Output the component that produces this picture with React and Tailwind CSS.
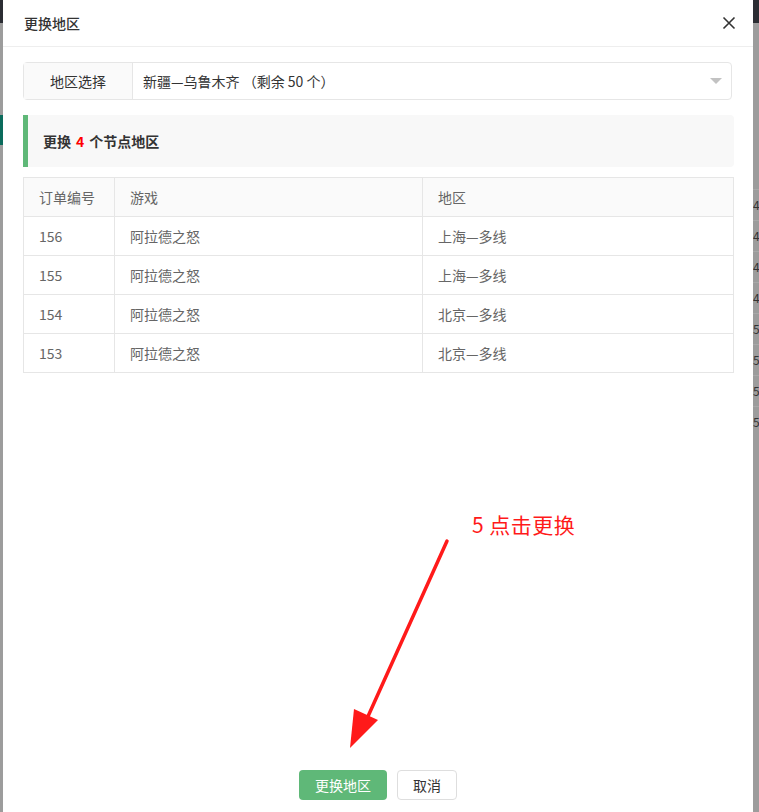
import React from 'react';

const ROWS = [
  { id: '156', game: '阿拉德之怒', region: '上海—多线' },
  { id: '155', game: '阿拉德之怒', region: '上海—多线' },
  { id: '154', game: '阿拉德之怒', region: '北京—多线' },
  { id: '153', game: '阿拉德之怒', region: '北京—多线' },
];

const SIDE_DIGITS = ['4', '4', '4', '4', '5', '5', '5', '5'];

export default function App() {
  return (
    <div
      className="flex h-[812px] w-[759px] overflow-hidden bg-[#999]"
      style={{ fontFamily: '"Noto Sans CJK SC", "Noto Sans", "Liberation Sans", sans-serif' }}
    >
      {/* Page behind, left edge */}
      <div className="flex w-[3px] shrink-0 flex-col bg-[#9c9c9c]">
        <div className="h-[23px] bg-[#2b2d33]" />
        <div className="mt-[92px] h-[30px] bg-[#0b6b5c]" />
      </div>

      {/* Modal */}
      <div className="relative flex w-[750px] shrink-0 flex-col bg-white">
        {/* Header */}
        <div className="flex h-[47px] shrink-0 items-center justify-between border-b border-[#eee] pl-[21px] pr-[17px]">
          <span className="text-[14px] font-medium text-[#333]">更换地区</span>
          <svg className="h-[14px] w-[14px]" viewBox="0 0 14 14" fill="none" stroke="#333" strokeWidth="1.6">
            <path d="M1.5 1.5l11 11M12.5 1.5l-11 11" />
          </svg>
        </div>

        {/* Body */}
        <div className="flex flex-1 flex-col pl-5 pr-[19px] pt-[15px]">
          {/* Region select */}
          <div className="mr-[2px] flex h-[38px] rounded-sm border border-[#e6e6e6]">
            <div className="flex w-[109px] items-center justify-center border-r border-[#e6e6e6] bg-[#fafafa] text-[14px] text-[#333]">
              地区选择
            </div>
            <div className="flex flex-1 items-center justify-between pl-[10px] pr-[9px] text-[14px] text-[#333]">
              <span>新疆—乌鲁木齐 （剩余 50 个）</span>
              <span className="h-0 w-0 border-x-[6px] border-t-[6px] border-x-transparent border-t-[#c2c2c2]" />
            </div>
          </div>

          {/* Quote */}
          <div className="mt-[15px] flex h-[52px] items-center rounded-r-sm border-l-[5px] border-[#5fb878] bg-[#f8f8f8] pl-[15px] text-[14px] font-bold text-[#333]">
            更换 <span className="mx-[5px] text-[#ff0000]">4</span> 个节点地区
          </div>

          {/* Table */}
          <table className="mt-[10px] w-full border-collapse text-[14px] text-[#666]">
            <thead>
              <tr className="h-[39px] bg-[#fafafa]">
                <th className="w-[91px] border border-[#e6e6e6] pl-[15px] text-left font-normal">订单编号</th>
                <th className="w-[308px] border border-[#e6e6e6] pl-[15px] text-left font-normal">游戏</th>
                <th className="border border-[#e6e6e6] pl-[15px] text-left font-normal">地区</th>
              </tr>
            </thead>
            <tbody>
              {ROWS.map(r => (
                <tr key={r.id} className="h-[39px]">
                  <td className="border border-[#e6e6e6] pl-[15px]">{r.id}</td>
                  <td className="border border-[#e6e6e6] pl-[15px]">{r.game}</td>
                  <td className="border border-[#e6e6e6] pl-[15px]">{r.region}</td>
                </tr>
              ))}
            </tbody>
          </table>
        </div>

        {/* Footer buttons */}
        <div className="flex shrink-0 justify-center gap-[10px] pb-[12px]">
          <button className="h-[30px] w-[88px] rounded-sm bg-[#5fb878] text-[14px] text-white">更换地区</button>
          <button className="h-[30px] w-[60px] rounded-sm border border-[#dedede] bg-white text-[14px] text-[#333]">取消</button>
        </div>

        {/* Annotation */}
        <span className="absolute left-[469px] top-[510px] text-[21px] leading-[28px] tracking-[0.5px] text-[#ff1a1a]">5 点击更换</span>
        <svg className="absolute left-[330px] top-[535px]" width="130" height="220" viewBox="0 0 130 220">
          <path d="M114 6 L32 188" stroke="#ff1a1a" strokeWidth="3.5" strokeLinecap="round" />
          <path d="M17 213 L21 174 L45 185 Z" fill="#ff1a1a" />
        </svg>
      </div>

      {/* Page behind, right edge */}
      <div className="flex w-[6px] shrink-0 flex-col overflow-hidden bg-[#9c9c9c]">
        <div className="h-[23px] shrink-0 bg-[#2b2d33]" />
        <div className="mt-[166px] flex flex-col">
          {SIDE_DIGITS.map((d, i) => (
            <div key={i} className="flex h-[31px] items-center border-t border-[#a8a8a8] text-[12px] text-[#333]">
              {d}
            </div>
          ))}
        </div>
      </div>
    </div>
  );
}
